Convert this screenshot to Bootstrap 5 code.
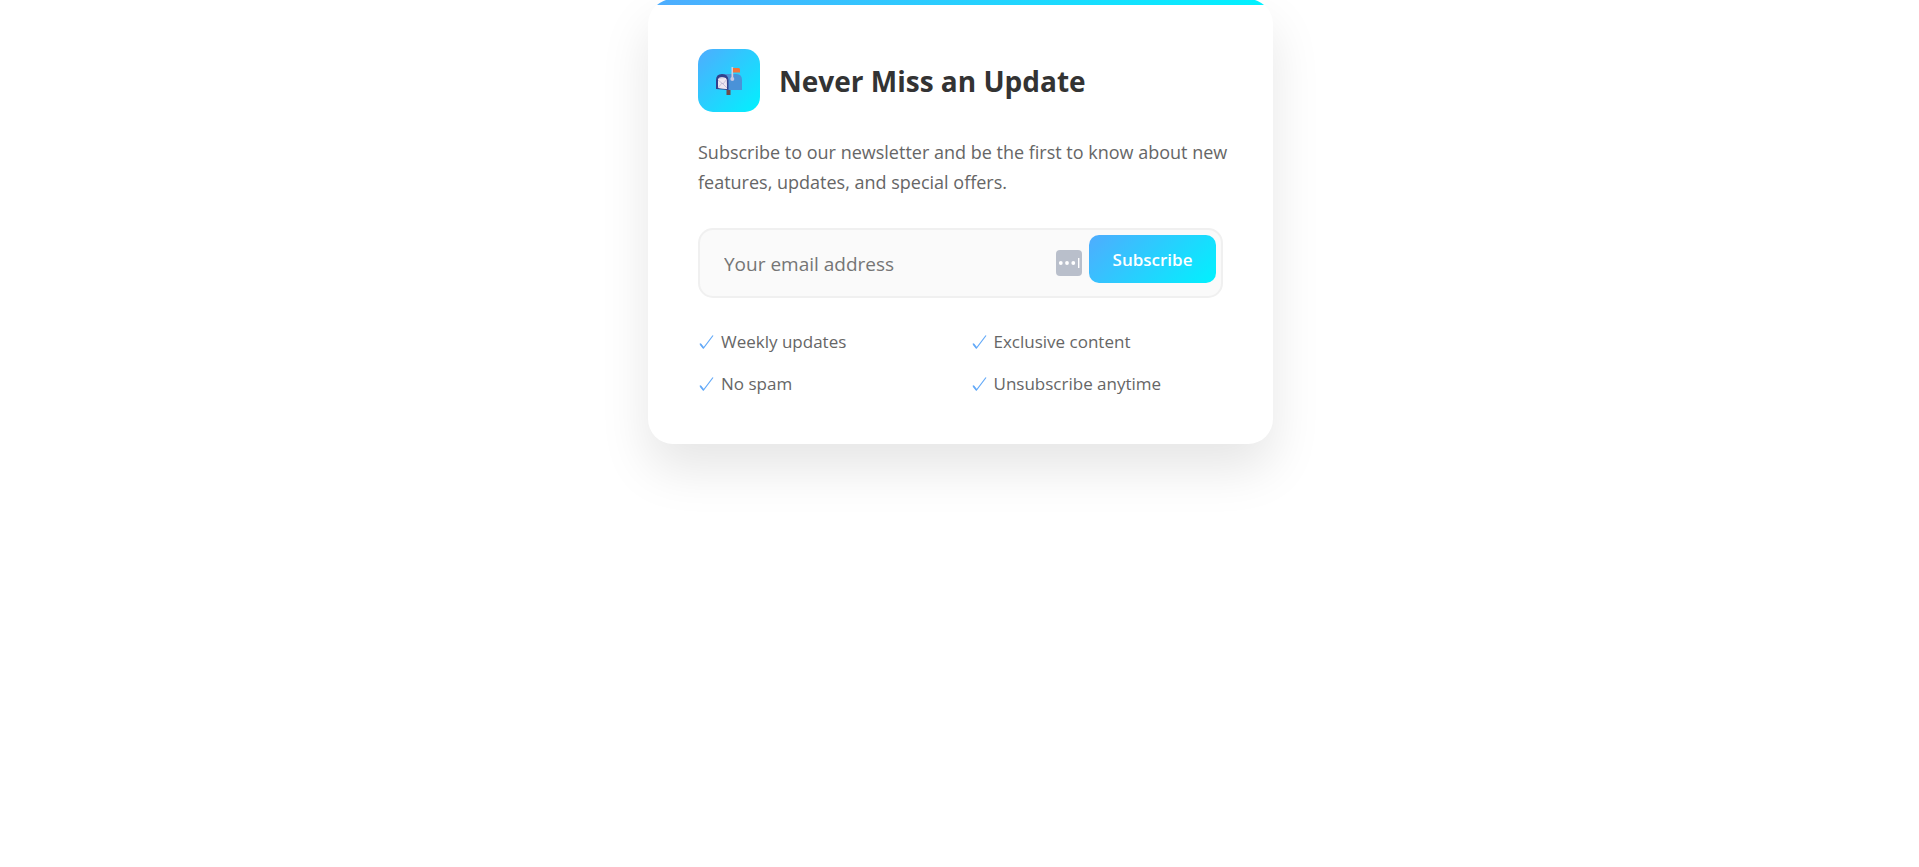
<!DOCTYPE html>
<html lang="en">
<head>
<meta charset="utf-8">
<meta name="viewport" content="width=device-width, initial-scale=1">
<title>Newsletter</title>
<link href="https://cdn.jsdelivr.net/npm/bootstrap@5.3.0/dist/css/bootstrap.min.css" rel="stylesheet">
<style>
  body { background: #fff; font-family: "Open Sans", "Noto Sans", sans-serif; padding-left: 2px; }
  .news-card { max-width: 625px; margin-top: -1px; border-radius: 25px; box-shadow: 0 25px 50px rgba(0, 0, 0, .1); }
  .news-bar { height: 6px; background: linear-gradient(90deg, #4facfe, #00f2fe); }
  .news-body { padding: 44px 50px 49px; }
  .news-head { gap: 19px; margin-bottom: 25px; }
  .news-icon { width: 62px; height: 63px; border-radius: 15px; background: linear-gradient(135deg, #4facfe, #00f2fe); }
  .news-title { font-size: 28px; line-height: 40px; font-weight: 700; color: #333; }
  .news-text { font-size: 18px; line-height: 30px; color: #666; margin: 0 -8px 31px 0; }
  .news-form { padding: 5px; border: 2px solid #f0f0f0; border-radius: 15px; background: #fafafa; margin-bottom: 33px; }
  .news-input, .news-input:focus { height: 56px; padding: 2px 12px 0 19px; border: 0; background: transparent; box-shadow: none; font-size: 19px; color: #333; }
  .news-input::placeholder { color: #757575; }
  .news-submit { width: 127px; height: 48px; padding: 2px 0 0; border: 0; border-radius: 10px; background: linear-gradient(135deg, #4facfe, #00f2fe); color: #fff; font-size: 17px; font-weight: 600; }
  .news-key { margin-right: 7px; }
  .news-list { --bs-gutter-x: 20px; row-gap: 20px; font-size: 17px; line-height: 22px; color: #666; }
  .news-list li { gap: 7px; }
</style>
</head>
<body class="d-flex flex-column min-vh-100">
<main class="news-card w-100 mx-auto bg-white overflow-hidden">
  <div class="news-bar"></div>
  <div class="news-body">
    <div class="news-head d-flex align-items-center">
      <div class="news-icon d-flex align-items-center justify-content-center flex-shrink-0">
        <svg width="26" height="30" viewBox="0 0 26 30" aria-hidden="true">
          <path d="M10.500 20h4v9h-4z" fill="#6d4b4d"/>
          <path d="M5 8h15q6 0 6 6v10H9z" fill="#4a92d8"/>
          <path d="M0 23V14q0-6 6-6t6.500 6v10z" fill="#32408c"/>
          <path d="M2 22V14q0-3 4-3t5 3v9z" fill="#cfc8dc"/>
          <path d="M2 13l8-1 1 11-9-1z" fill="#eee6f1"/>
          <path d="M2 14l5 4 4-5M2 22l4-5 5 5" fill="none" stroke="#b8afcf" stroke-width=".7"/>
          <path d="M15.500 1h1.700v12h-1.700z" fill="#d9cbdc"/>
          <circle cx="16.300" cy="13" r="2" fill="#c7c7e4"/>
          <path d="M17 2h6l1 1v3.500h-7z" fill="#f1753d"/>
        </svg>
      </div>
      <h1 class="news-title mb-0">Never Miss an Update</h1>
    </div>
    <p class="news-text">Subscribe to our newsletter and be the first to know about new features, updates, and special offers.</p>
    <form class="news-form d-flex align-items-start" onsubmit="return false">
      <input id="email" type="email" class="news-input form-control" placeholder="Your email address" aria-label="Your email address">
      <svg class="news-key flex-shrink-0 align-self-center" width="26" height="26" viewBox="0 0 26 26" aria-hidden="true">
        <rect width="26" height="26" rx="4" fill="#b9bfcb"/>
        <g fill="#fff"><circle cx="4.800" cy="13" r="1.900"/><circle cx="11" cy="13" r="1.900"/><circle cx="17.300" cy="13" r="1.900"/><rect x="22" y="8" width="1.400" height="10"/></g>
      </svg>
      <button type="submit" class="news-submit btn flex-shrink-0">Subscribe</button>
    </form>
    <ul class="news-list row list-unstyled mb-0">
      <li class="col-6 d-flex align-items-center"><svg width="16" height="16" viewBox="0 0 16 16" fill="none" stroke="#64aaf8" aria-hidden="true"><path d="M2 9.500L5.500 14 15 1.500" stroke-width="1.200"/><path d="M2.300 10L5.500 14" stroke-width="1.800"/></svg>Weekly updates</li>
      <li class="col-6 d-flex align-items-center"><svg width="16" height="16" viewBox="0 0 16 16" fill="none" stroke="#64aaf8" aria-hidden="true"><path d="M2 9.500L5.500 14 15 1.500" stroke-width="1.200"/><path d="M2.300 10L5.500 14" stroke-width="1.800"/></svg>Exclusive content</li>
      <li class="col-6 d-flex align-items-center"><svg width="16" height="16" viewBox="0 0 16 16" fill="none" stroke="#64aaf8" aria-hidden="true"><path d="M2 9.500L5.500 14 15 1.500" stroke-width="1.200"/><path d="M2.300 10L5.500 14" stroke-width="1.800"/></svg>No spam</li>
      <li class="col-6 d-flex align-items-center"><svg width="16" height="16" viewBox="0 0 16 16" fill="none" stroke="#64aaf8" aria-hidden="true"><path d="M2 9.500L5.500 14 15 1.500" stroke-width="1.200"/><path d="M2.300 10L5.500 14" stroke-width="1.800"/></svg>Unsubscribe anytime</li>
    </ul>
  </div>
</main>
<script src="https://cdn.jsdelivr.net/npm/bootstrap@5.3.0/dist/js/bootstrap.bundle.min.js"></script>
</body>
</html>
